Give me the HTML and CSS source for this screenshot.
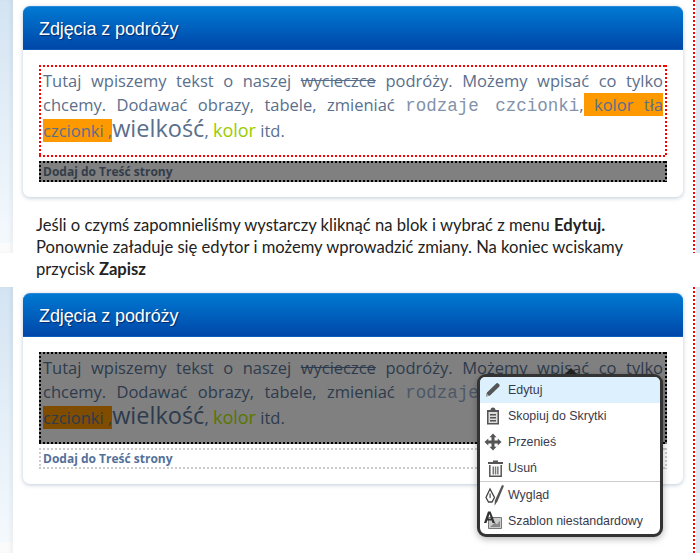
FILE: index.html
```html
<!DOCTYPE html>
<html lang="pl">
	<head>
		<meta charset="UTF-8"/>
		<title>Zdjęcia z podróży</title>
		<link rel="stylesheet" href="styles.css">
	</head>
	<body>
	  <div class="sheet">
		<div class="strip-left top"></div>
		<div class="strip-right top"></div>
		<div class="strip-left bottom"></div>
		<div class="strip-right bottom"></div>

		<div class="content">
		  <div class="panel">
			<h2 class="panel-head">Zdjęcia z podróży</h2>
			<div class="panel-body">
			  <div class="block dots selected">
				Tutaj wpiszemy tekst o naszej <s>wycieczce</s> podróży. Możemy wpisać co tylko chcemy. Dodawać obrazy, tabele, zmieniać <span class="mono">rodzaje czcionki</span>,<span class="mark"> kolor tła czcionki ,</span><span class="big">wielkość</span>, <span class="green">kolor</span> itd.
			  </div>
			  <div class="add dots add-dark">Dodaj do Treść strony</div>
			</div>
		  </div>

		  <p class="note">
			Jeśli o czymś zapomnieliśmy wystarczy kliknąć na blok i wybrać z menu <b>Edytuj.</b><br>
			Ponownie załaduje się edytor i możemy wprowadzić zmiany. Na koniec wciskamy<br>
			przycisk <b>Zapisz</b>
		  </p>

		  <div class="panel">
			<h2 class="panel-head">Zdjęcia z podróży</h2>
			<div class="panel-body">
			  <div class="block dots dimmed">
				Tutaj wpiszemy tekst o naszej <s>wycieczce</s> podróży. Możemy wpisać co tylko chcemy. Dodawać obrazy, tabele, zmieniać <span class="mono">rodzaje czcionki</span>,<span class="mark"> kolor tła czcionki ,</span><span class="big">wielkość</span>, <span class="green">kolor</span> itd.
			  </div>
			  <div class="add dots add-light">Dodaj do Treść strony</div>
			</div>

			<div class="menu">
			  <div class="menu-item active">
				<svg viewBox="0 0 20 22" width="20" height="22"><path fill="#555" d="M1 17.500l1-4L11 4.700c.8-.8 1.800-.8 2.500 0l.6.6c.7.7.7 1.700 0 2.400L5 16.500z"/><path fill="#aaa" d="M1 17.500l.7-3 2.300 2.300z"/></svg>
				Edytuj
			  </div>
			  <div class="menu-item">
				<svg viewBox="0 0 20 22" width="20" height="22"><path fill="#555" d="M2 5h3.500c0-1.500 1-2.500 2.500-2.500s2.500 1 2.500 2.500H14v14.500H2z"/><path fill="#ddd" d="M3.500 7h9v11h-9z"/><path fill="#555" d="M5 9h6v1.500H5zM5 12h6v1.500H5zM5 15h6v1.500H5z"/></svg>
				Skopiuj do Skrytki
			  </div>
			  <div class="menu-item">
				<svg viewBox="0 0 20 22" width="20" height="22"><path fill="#555" d="M8 2.500l3.500 3.800H9.500v3.200h3.200v-2l3.800 3.500-3.800 3.500v-2H9.500v3.200h2L8 19.500 4.500 15.700h2v-3.200H3.300v2L-.5 11l3.800-3.500v2h3.200V6.300h-2z"/></svg>
				Przenieś
			  </div>
			  <div class="menu-item">
				<svg viewBox="0 0 20 22" width="20" height="22"><path fill="#555" d="M3 5h5V3.500h5V5h5v2H3z"/><path fill="none" stroke="#555" stroke-width="1.500" d="M4.800 8v11.200h11.400V8"/><path fill="#777" d="M7.500 9.500h1.500v8H7.500zM9.800 9.500h1.500v8H9.800zM12.100 9.500h1.500v8h-1.500z"/></svg>
				Usuń
			  </div>
			  <div class="menu-sep"></div>
			  <div class="menu-item">
				<svg viewBox="0 0 20 22" width="20" height="22"><path fill="none" stroke="#444" stroke-width="1.300" d="M5 5L1 13.500 3.500 18h3.500L9.500 13.500z"/><path fill="#444" d="M4.500 9.500h1.200V14H4.500z"/><path fill="#555" d="M17 1l2 .8-6.500 15.500-3 4.500.3-5z"/></svg>
				Wygląd
			  </div>
			  <div class="menu-item">
				<svg viewBox="0 0 20 22" width="20" height="22"><path fill="#ccc" stroke="#777" d="M3.500 7.500h13v11h-13z"/><path fill="#888" d="M5 17l5-4.500 2 2 3-4v6.500z"/><path fill="#333" d="M3 1.500h2.600L10 13H7.500l-.8-2.500H2.300L1.500 13H-1zM3 8.700h3L4.500 4z"/></svg>
				Szablon niestandardowy
			  </div>
			</div>
		  </div>
		</div>
	  </div>
	</body>
</html>
```

FILE: styles.css
```css
* {
  box-sizing: border-box;
}
body {
  margin: 0;
  background: #fff;
}
.sheet {
  display: grid;
  grid-template-columns: 13px 680px 7px;
  grid-template-rows: 253px 34px 266px;
  width: 700px;
}
.strip-left {
  grid-column: 1;
  background: linear-gradient(#d3e4f2, #f4f9fd 96%, #fbfbfb 96%);
  box-shadow: inset -3px 0 3px rgba(0, 0, 0, 0.04);
}
.strip-right {
  grid-column: 3;
  background:
    repeating-linear-gradient(to bottom, #f00 0 2px, transparent 2px 4px) left / 2px 100% no-repeat,
    linear-gradient(#dfe9f5, #dfe9f5) right / 4px 100% no-repeat;
}
.top {
  grid-row: 1;
}
.bottom {
  grid-row: 3;
}
.content {
  grid-column: 2;
  grid-row: 1 / 4;
  padding: 6px 10px 0;
}

/* square dotted frame, browser dotted borders come out round */
.dots {
  border: 2px solid transparent;
  background-image:
    repeating-linear-gradient(to right, var(--dot) 0 2px, transparent 2px 4px),
    repeating-linear-gradient(to right, var(--dot) 0 2px, transparent 2px 4px),
    repeating-linear-gradient(to bottom, var(--dot) 0 2px, transparent 2px 4px),
    repeating-linear-gradient(to bottom, var(--dot) 0 2px, transparent 2px 4px);
  background-size: 100% 2px, 100% 2px, 2px 100%, 2px 100%;
  background-position: top, bottom, left, right;
  background-repeat: no-repeat;
  background-origin: border-box;
}

/* panel */
.panel {
  position: relative;
  height: 191px;
  background: #fff;
  border-radius: 7px;
  box-shadow: 0 1px 4px rgba(70, 100, 140, 0.35);
}
.panel-head {
  margin: 0;
  height: 44px;
  padding-left: 16px;
  font-family: "Liberation Sans", Arial, sans-serif;
  font-size: 18px;
  font-weight: 400;
  letter-spacing: -0.1px;
  line-height: 45px;
  color: #fff;
  text-shadow: 1px 1px 1px rgba(0, 30, 90, 0.8);
  background: linear-gradient(#0079d2, #0047a8);
  border-top: 1px solid #2a88d8;
  border-bottom: 1px solid #0a5cb8;
  border-radius: 7px 7px 0 0;
}
.panel-body {
  padding: 15px 16px;
}

/* text block */
.block {
  height: 92px;
  padding: 2px;
  font-family: "Open Sans", sans-serif;
  font-size: 16.500px;
  line-height: 24px;
  text-align: justify;
  color: #5a6f8c;
}
.selected {
  --dot: #f00;
}
.dimmed {
  --dot: #000;
  background-color: #808080;
  color: #2d3b4d;
}
.mono {
  font-family: "Liberation Mono", monospace;
  font-size: 17.500px;
  line-height: 1;
  color: #8292aa;
}
.mark {
  background: #f90;
}
.big {
  font-size: 23.500px;
  line-height: 1;
}
.green {
  font-size: 18px;
  line-height: 1;
  color: #9c0;
}
.dimmed .mono {
  color: #4c5868;
}
.dimmed .mark {
  background: #804d00;
}
.dimmed .green {
  color: #5a7500;
}
.add {
  height: 21px;
  margin-top: 4px;
  padding-left: 2px;
  font-family: "Open Sans", sans-serif;
  font-size: 12px;
  font-weight: 700;
  line-height: 17px;
}
.add-dark {
  --dot: #000;
  background-color: #808080;
  color: #333d4a;
}
.add-light {
  --dot: #ccc;
  color: #54709a;
}

/* text between panels */
.note {
  margin: 0;
  height: 96px;
  padding: 17px 0 0 13px;
  font-family: Lato, sans-serif;
  font-size: 16.600px;
  line-height: 22px;
  color: #222;
}

/* context menu */
.menu {
  position: absolute;
  left: 454px;
  top: 81px;
  width: 186px;
  height: 163px;
  background: #fff;
  border: 3px solid #333;
  border-radius: 9px;
  box-shadow: 0 2px 7px rgba(0, 0, 0, 0.3);
  font-family: "Liberation Sans", Arial, sans-serif;
  font-size: 12.400px;
  color: #3a3a4a;
}
.menu::before {
  content: "";
  position: absolute;
  left: 85px;
  top: -9px;
  border: 6px solid transparent;
  border-top: 0;
  border-bottom-color: #222;
}
.menu-item {
  display: flex;
  align-items: center;
  gap: 3px;
  height: 26px;
  padding-left: 5px;
}
.menu-item svg {
  overflow: visible;
}
.active {
  background: #dcf0fd;
  border-radius: 5px 5px 0 0;
}
.menu-sep {
  height: 1px;
  background: #ccc;
}
```
